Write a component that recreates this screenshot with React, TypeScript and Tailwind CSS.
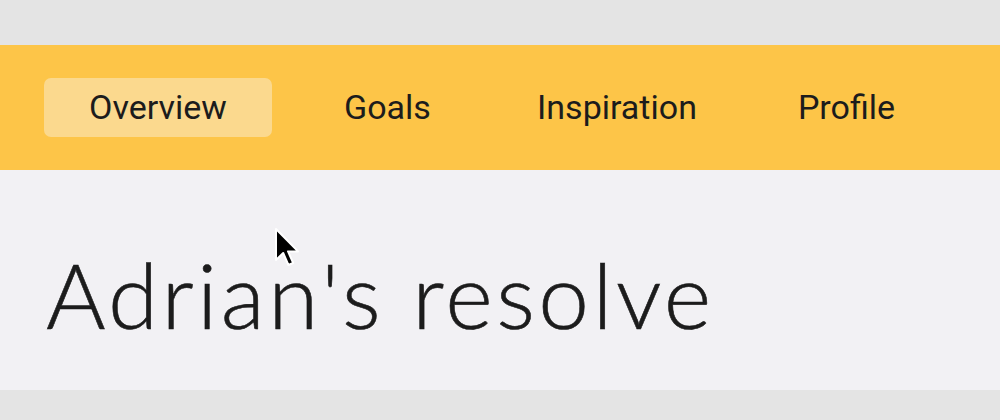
import React from "react";

const tabs = ["Overview", "Goals", "Inspiration", "Profile"];

export default function App() {
  return (
    <div className="w-[1000px] h-[420px] flex flex-col bg-[#e4e4e4] relative overflow-hidden">
      <div className="h-[45px] bg-[#e4e4e4]" />
      <nav className="h-[125px] bg-[#fdc548] flex items-center pl-[44px] gap-[1.5px]">
        {tabs.map((t, i) => (
          <div
            key={t}
            className={`w-[228px] h-[59px] flex items-center justify-center rounded-[7px] text-[34px] text-[#1c1c1c] font-['Roboto',sans-serif] ${i === 0 ? "bg-[#fbd98e]" : ""}`}
          >
            {t}
          </div>
        ))}
      </nav>
      <main className="h-[220px] bg-[#f2f1f4] flex items-center pl-[46px] pt-[26px]">
        <h1 className="text-[91px] font-light leading-none text-[#1c1c1c] font-['Lato',sans-serif] tracking-[3.4px] [-webkit-text-stroke:0.6px_#1c1c1c]">
          Adrian's resolve
        </h1>
      </main>
      <div className="h-[30px] bg-[#e4e4e4]" />
      <svg
        className="absolute left-[274px] top-[227px]"
        width="26"
        height="40"
        viewBox="-1 -1 13 20"
      >
        <path
          d="M0 0 L0 15.5 L3.6 12 L6.2 18 L8.6 17 L6 11.2 L11 11.2 Z"
          fill="#000"
          stroke="#fff"
          strokeWidth="1"
          strokeLinejoin="round"
        />
      </svg>
    </div>
  );
}
